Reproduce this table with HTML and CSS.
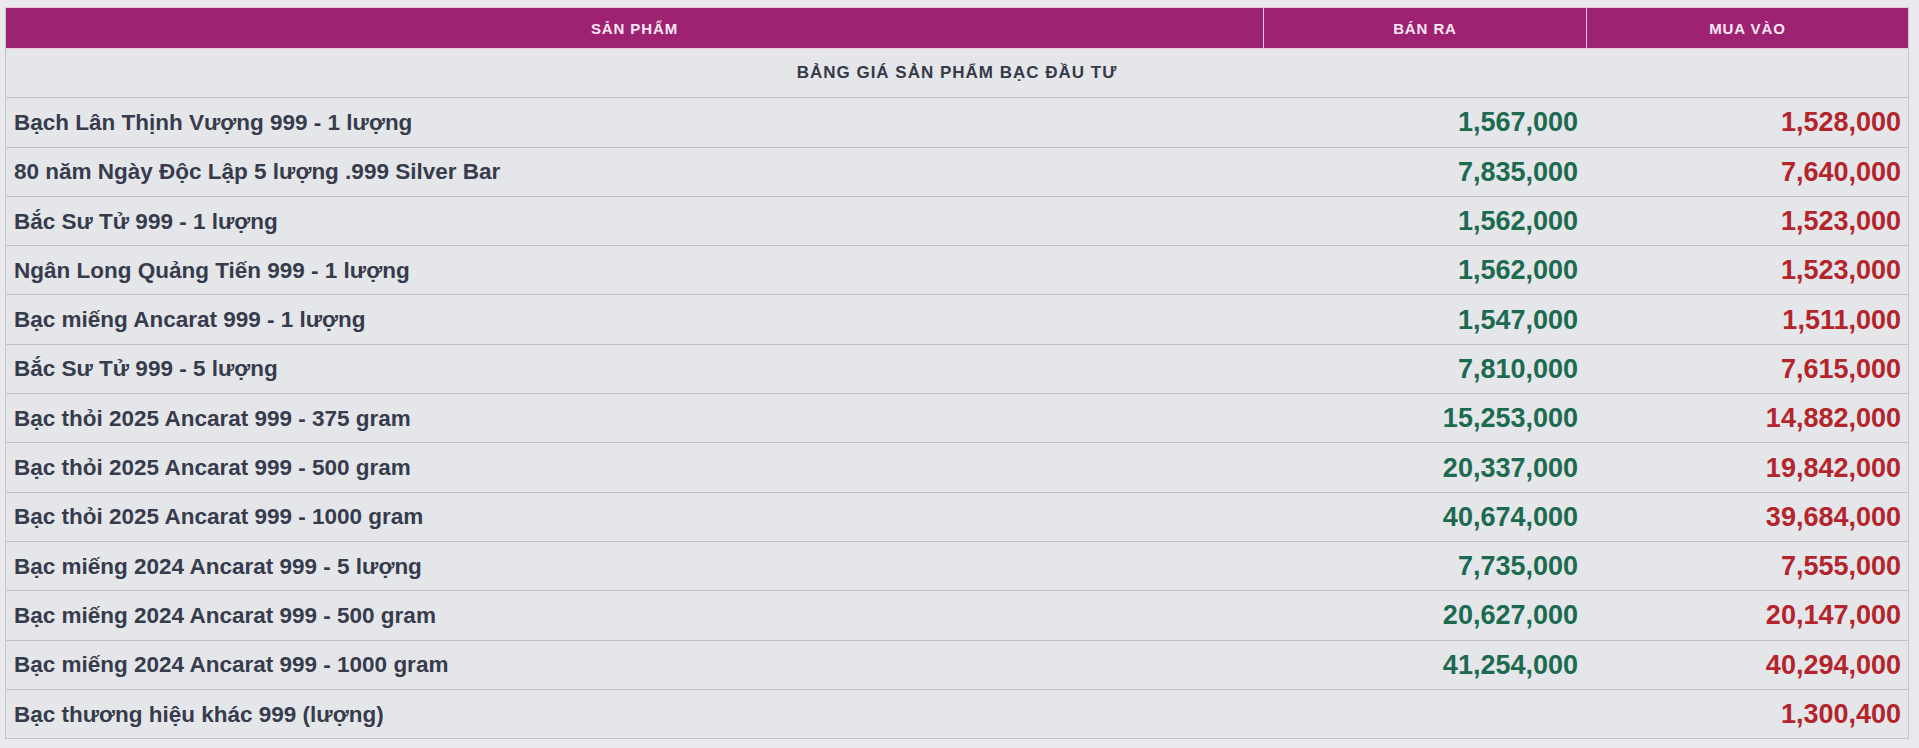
FILE: index.html
```html
<!DOCTYPE html>
<html lang="vi">
<head>
<meta charset="utf-8">
<title>Bảng giá sản phẩm bạc đầu tư</title>
<link rel="stylesheet" href="styles.css">
</head>
<body>
<div class="price-table">
  <div class="head">
    <div class="head-cell">SẢN PHẨM</div>
    <div class="head-cell">BÁN RA</div>
    <div class="head-cell">MUA VÀO</div>
  </div>
  <div class="section-row">BẢNG GIÁ SẢN PHẨM BẠC ĐẦU TƯ</div>
  <div class="row"><div class="name">Bạch Lân Thịnh Vượng 999 - 1 lượng</div><div class="sell">1,567,000</div><div class="buy">1,528,000</div></div>
  <div class="row"><div class="name">80 năm Ngày Độc Lập 5 lượng .999 Silver Bar</div><div class="sell">7,835,000</div><div class="buy">7,640,000</div></div>
  <div class="row"><div class="name">Bắc Sư Tử 999 - 1 lượng</div><div class="sell">1,562,000</div><div class="buy">1,523,000</div></div>
  <div class="row"><div class="name">Ngân Long Quảng Tiến 999 - 1 lượng</div><div class="sell">1,562,000</div><div class="buy">1,523,000</div></div>
  <div class="row"><div class="name">Bạc miếng Ancarat 999 - 1 lượng</div><div class="sell">1,547,000</div><div class="buy">1,511,000</div></div>
  <div class="row"><div class="name">Bắc Sư Tử 999 - 5 lượng</div><div class="sell">7,810,000</div><div class="buy">7,615,000</div></div>
  <div class="row"><div class="name">Bạc thỏi 2025 Ancarat 999 - 375 gram</div><div class="sell">15,253,000</div><div class="buy">14,882,000</div></div>
  <div class="row"><div class="name">Bạc thỏi 2025 Ancarat 999 - 500 gram</div><div class="sell">20,337,000</div><div class="buy">19,842,000</div></div>
  <div class="row"><div class="name">Bạc thỏi 2025 Ancarat 999 - 1000 gram</div><div class="sell">40,674,000</div><div class="buy">39,684,000</div></div>
  <div class="row"><div class="name">Bạc miếng 2024 Ancarat 999 - 5 lượng</div><div class="sell">7,735,000</div><div class="buy">7,555,000</div></div>
  <div class="row"><div class="name">Bạc miếng 2024 Ancarat 999 - 500 gram</div><div class="sell">20,627,000</div><div class="buy">20,147,000</div></div>
  <div class="row"><div class="name">Bạc miếng 2024 Ancarat 999 - 1000 gram</div><div class="sell">41,254,000</div><div class="buy">40,294,000</div></div>
  <div class="row"><div class="name">Bạc thương hiệu khác 999 (lượng)</div><div class="sell"></div><div class="buy">1,300,400</div></div>
</div>
</body>
</html>
```
FILE: styles.css
```css
html, body {
  margin: 0;
  padding: 0;
  background: #eaeaee;
}

.price-table {
  margin: 7px 10px 0 5px;
  border-left: 1px solid #c4c5c9;
  border-right: 1px solid #c4c5c9;
  background: #e5e6ea;
  font-family: "Liberation Sans", Arial, Helvetica, sans-serif;
}

.head {
  display: grid;
  grid-template-columns: 1fr 323px 322px;
  background: #9d2272;
  border-top: 1px solid #f3c6e0;
  border-bottom: 1px solid #f3c6e0;
}

.head-cell {
  height: 40px;
  display: flex;
  align-items: center;
  justify-content: center;
  color: #fbe8f3;
  font-size: 15px;
  font-weight: bold;
  letter-spacing: 0.9px;
}

.head-cell + .head-cell {
  border-left: 1px solid #f3c6e0;
}

.section-row {
  height: 48.3px;
  display: flex;
  align-items: center;
  justify-content: center;
  border-bottom: 1px solid #c2c3c7;
  color: #353a46;
  font-size: 17px;
  font-weight: bold;
  letter-spacing: 1px;
}

.row {
  display: grid;
  grid-template-columns: 1fr 323px 322px;
  align-items: center;
  height: 48.3px;
  border-bottom: 1px solid #c2c3c7;
}

.name {
  padding: 1px 0 0 8px;
  color: #363c4c;
  font-size: 22.5px;
  font-weight: bold;
}

.sell,
.buy {
  padding-top: 1px;
  text-align: right;
  font-size: 27px;
  font-weight: bold;
}

.sell {
  padding-right: 8px;
  color: #1c6a4f;
}

.buy {
  padding-right: 7px;
  color: #b3242b;
}
```
